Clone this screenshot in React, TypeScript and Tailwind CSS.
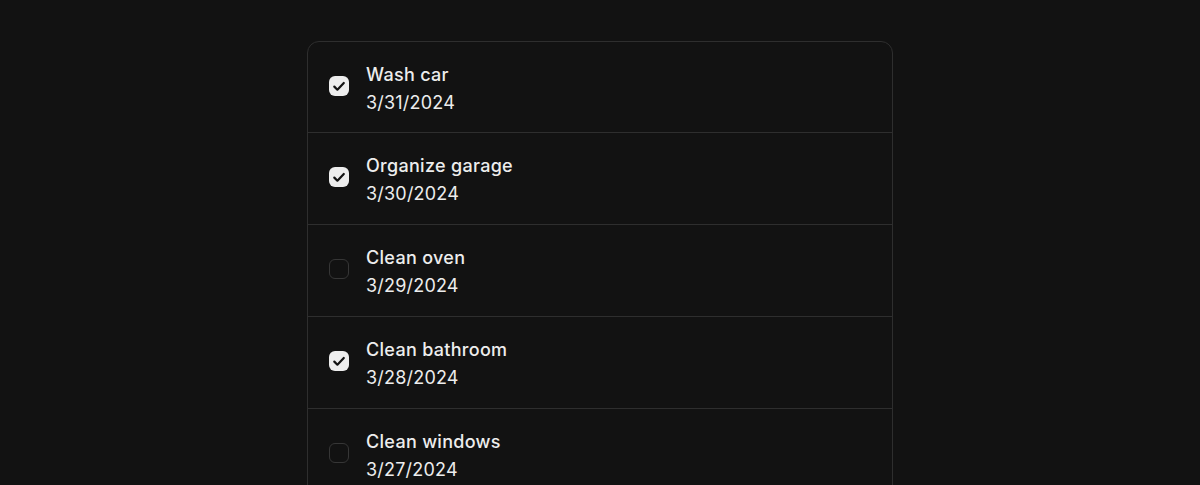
import React from "react";

const items = [
  { title: "Wash car", date: "3/31/2024", done: true },
  { title: "Organize garage", date: "3/30/2024", done: true },
  { title: "Clean oven", date: "3/29/2024", done: false },
  { title: "Clean bathroom", date: "3/28/2024", done: true },
  { title: "Clean windows", date: "3/27/2024", done: false },
  { title: "Vacuum living room", date: "3/26/2024", done: false },
];

function Check({ done }: { done: boolean }) {
  if (done) {
    return (
      <div className="w-5 h-5 mt-4 rounded-[6px] bg-[#ededed] flex items-center justify-center shrink-0">
        <svg width="20" height="20" viewBox="0 0 20 20" fill="none" stroke="#121212" strokeWidth="2.2" strokeLinecap="round" strokeLinejoin="round">
          <path d="M5.3 10.6l3.1 3.1L14.8 7" />
        </svg>
      </div>
    );
  }
  return <div className="w-5 h-5 mt-4 rounded-[6px] border border-[#363636] shrink-0" />;
}

export default function App() {
  return (
    <div className="h-[485px] overflow-hidden bg-[#121212] flex justify-center pt-[41px]" style={{ fontFamily: "Inter, 'Noto Sans', sans-serif" }}>
      <div className="w-[586px] h-fit border border-[#2e2e2e] rounded-xl">
        {items.map((it, i) => (
          <div
            key={it.title}
            className={
              i === 0
                ? "flex items-start gap-4 pl-[21px] pr-5 pt-[18px] h-[90px]"
                : "flex items-start gap-4 pl-[21px] pr-5 pt-[18px] h-[92px] border-t border-[#2e2e2e]"
            }
          >
            <Check done={it.done} />
            <div className="text-[18px] leading-7 text-[#ededed] pl-px pt-px">
              <div className="font-medium tracking-[0.3px]">{it.title}</div>
              <div className="tracking-[0.2px]">{it.date}</div>
            </div>
          </div>
        ))}
      </div>
    </div>
  );
}
